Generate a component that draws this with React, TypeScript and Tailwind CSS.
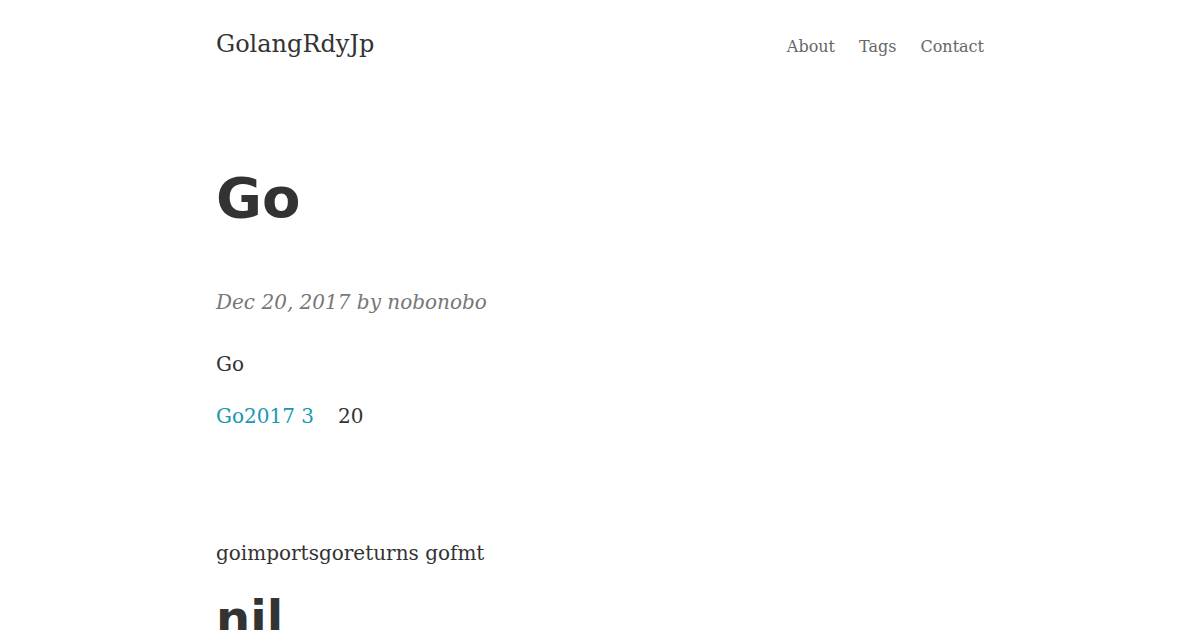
export default function App() {
  return (
    <div className="min-h-screen bg-white text-[#333] font-['DejaVu_Serif',serif]">
      <div className="mx-auto w-[768px]">
        {/* Header */}
        <header className="flex items-start justify-between pt-[28px]">
          <a className="text-[24px] leading-[32px] text-[#333]">GolangRdyJp</a>
          <nav className="flex gap-6 text-[16px] leading-[32px] text-[#666] pt-[3px]">
            <a>About</a>
            <a>Tags</a>
            <a>Contact</a>
          </nav>
        </header>

        {/* Post */}
        <article className="pt-[95px]">
          <h1 className="font-['DejaVu_Sans',sans-serif] font-bold text-[56px] leading-[80px]">Go</h1>
          <p className="mt-[48px] italic text-[20px] leading-[32px] text-[#777]">
            Dec 20, 2017 by nobonobo
          </p>
          <p className="mt-[30px] text-[20px] leading-[32px]">Go</p>
          <p className="mt-[20px] text-[20px] leading-[32px]">
            <a className="text-[#1a97b0]">Go2017 3</a>
            <span className="ml-[24px]">20</span>
          </p>
          <p className="mt-[105px] text-[20px] leading-[32px]">goimportsgoreturns gofmt</p>
          <h2 className="mt-[17px] font-['DejaVu_Sans',sans-serif] font-bold text-[48px] leading-[64px]">nil</h2>
        </article>
      </div>
    </div>
  );
}
